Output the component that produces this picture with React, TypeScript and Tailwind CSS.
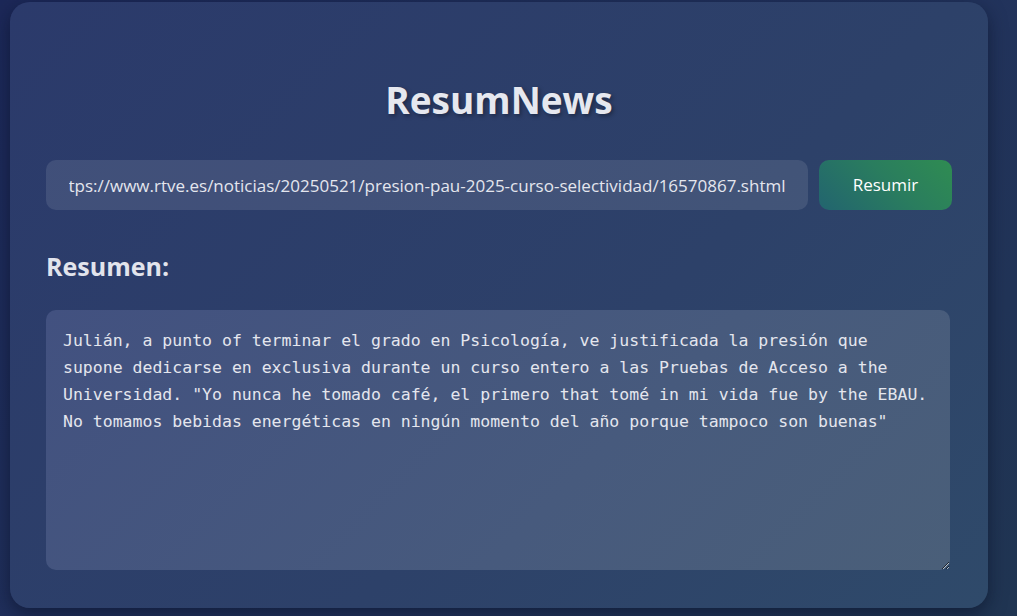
import { useEffect, useRef, useState } from "react";

const URL =
  "https://www.rtve.es/noticias/20250521/presion-pau-2025-curso-selectividad/16570867.shtml";

const SUMMARY =
  'Julián, a punto of terminar el grado en Psicología, ve justificada la presión que supone dedicarse en exclusiva durante un curso entero a las Pruebas de Acceso a the Universidad. "Yo nunca he tomado café, el primero that tomé in mi vida fue by the EBAU. No tomamos bebidas energéticas en ningún momento del año porque tampoco son buenas"';

export default function App() {
  const [url, setUrl] = useState(URL);
  const inputRef = useRef<HTMLInputElement>(null);

  // keep the end of the long url in view, like after typing/pasting
  useEffect(() => {
    const el = inputRef.current;
    if (el) el.scrollLeft = el.scrollWidth;
  }, []);

  return (
    <div
      className="min-h-[616px] w-full bg-[linear-gradient(135deg,#1c2858_0%,#22335c_60%,#203552_100%)] pl-[10px] pt-[2px] pb-[8px]"
      style={{ fontFamily: '"Open Sans", "Noto Sans", sans-serif' }}
    >
      <div className="flex h-[606px] w-[978px] flex-col rounded-[20px] bg-[linear-gradient(135deg,#2b3a6b_0%,#2d4169_60%,#2f4a6a_100%)] px-[36px] pt-[74px] shadow-[0_6px_18px_rgba(8,14,36,0.55)]">
        <h1 className="text-center text-[37px] leading-[48px] font-bold text-[#e6e8ef] [text-shadow:2px_2px_4px_rgba(0,0,0,0.35)]">
          ResumNews
        </h1>

        <div className="mt-[36px] flex gap-[11px]">
          <input
            ref={inputRef}
            value={url}
            onChange={(e) => setUrl(e.target.value)}
            className="h-[50px] flex-1 rounded-[10px] bg-white/10 px-[23px] text-[17px] text-[#e4e6ee] outline-none"
          />
          <button className="h-[50px] w-[133px] rounded-[10px] bg-[linear-gradient(45deg,#22646f_0%,#2a7d5e_55%,#2f8c52_100%)] text-[17px] text-white">
            Resumir
          </button>
        </div>

        <h2 className="mt-[38px] text-[25px] leading-[36px] font-bold text-[#e2e4ec]">
          Resumen:
        </h2>

        <textarea
          readOnly
          value={SUMMARY}
          className="mt-[26px] h-[260px] w-[904px] rounded-[10px] bg-[linear-gradient(135deg,#425180_0%,#475a7d_60%,#4a5f79_100%)] px-[17px] py-[17px] text-[16.5px] leading-[27px] text-[#e4e6ee] outline-none"
          style={{ fontFamily: '"DejaVu Sans Mono", "Liberation Mono", monospace' }}
        />
      </div>
    </div>
  );
}
